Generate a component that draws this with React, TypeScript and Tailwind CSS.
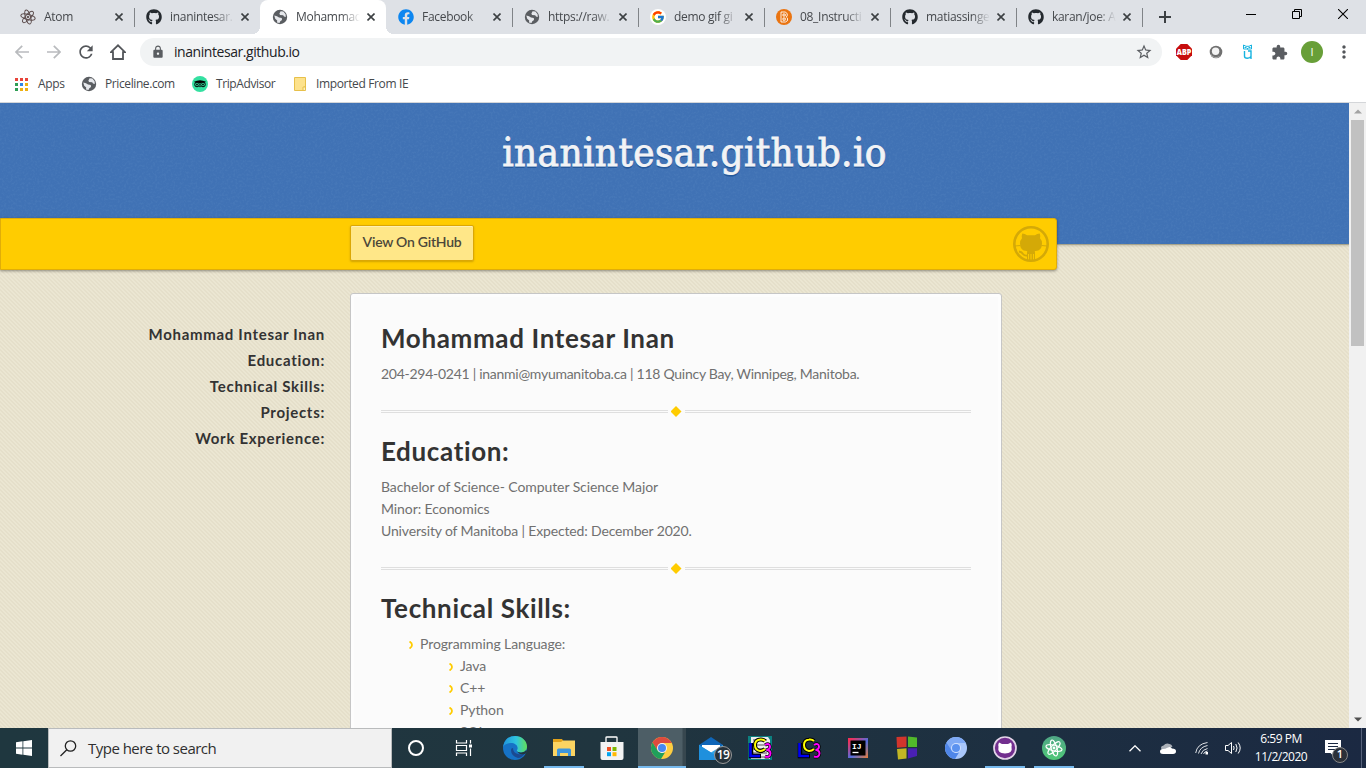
import React from "react";
import { FaGithub, FaFacebook } from "react-icons/fa";
import { FcGoogle } from "react-icons/fc";
import { MdLock, MdRefresh, MdStarBorder, MdMoreVert, MdExtension } from "react-icons/md";

function Globe({ size = 16 }: { size?: number }) {
  return (
    <svg width={size} height={size} viewBox="0 0 16 16">
      <circle cx="8" cy="8" r="7.2" fill="#5a5d61" />
      <path d="M2.3 6.6 L5 7.3 L7 8.4 L9.8 9 L10 11 L8.3 12.2 L7.5 14 L5 13.6 L5.2 11.4 L3.2 9.8 Z" fill="#e6e8ec" />
      <path d="M8.6 2.2 L11.4 2.6 L13.6 5.2 L13.8 8 L12 7.6 L11.2 6.2 L8 6 L7.4 4.6 Z" fill="#e6e8ec" />
    </svg>
  );
}

function Atom({ size = 16, color = "#5b4b4b", width = 1 }: { size?: number; color?: string; width?: number }) {
  return (
    <svg width={size} height={size} viewBox="0 0 16 16" fill="none" stroke={color} strokeWidth={width}>
      <ellipse cx="8" cy="8" rx="7.300" ry="2.500" transform="rotate(14 8 8)" />
      <ellipse cx="8" cy="8" rx="7.300" ry="2.500" transform="rotate(74 8 8)" />
      <ellipse cx="8" cy="8" rx="7.300" ry="2.500" transform="rotate(134 8 8)" />
      <circle cx="8" cy="8" r=".8" fill={color} />
    </svg>
  );
}

function Bitnami() {
  return (
    <svg width="16" height="16" viewBox="0 0 16 16">
      <circle cx="8" cy="8" r="8" fill="#ea7411" />
      <path d="M5 3h4.2l2 1.6v2.2L10.300 8l1.200 1.200v2.400L9.500 13H5z M7 5v2h2.200V5z M7 9v2.200h2.200V9z" fill="none" stroke="#fff" strokeWidth=".9" />
    </svg>
  );
}

function GoogleTab() {
  return (
    <span className="flex size-4 items-center justify-center rounded-full bg-white">
      <FcGoogle size={14} />
    </span>
  );
}

const tabs: { title: string; icon: React.ReactNode; active?: boolean; divider?: boolean }[] = [
  { title: "Atom", icon: <Atom />, divider: true },
  { title: "inanintesar.", icon: <FaGithub size={16} color="#24292e" /> },
  { title: "Mohammad", icon: <Globe />, active: true },
  { title: "Facebook", icon: <FaFacebook size={16} color="#0d86f0" />, divider: true },
  { title: "https://raw.", icon: <Globe />, divider: true },
  { title: "demo gif gi", icon: <GoogleTab />, divider: true },
  { title: "08_Instructi", icon: <Bitnami />, divider: true },
  { title: "matiassinge", icon: <FaGithub size={16} color="#24292e" />, divider: true },
  { title: "karan/joe: A", icon: <FaGithub size={16} color="#24292e" />, divider: true },
];

function Cross() {
  return (
    <svg width="8" height="8" viewBox="0 0 8 8" stroke="#3c4043" strokeWidth="1.6">
      <path d="M.5 .5 7.500 7.500M7.500 .5 .5 7.500" />
    </svg>
  );
}

function TabStrip() {
  return (
    <div className="flex h-[34px] shrink-0 bg-[#dee1e6] pl-2">
      {tabs.map((t) => (
        <div
          key={t.title}
          className={
            "relative flex h-[34px] w-[126px] shrink-0 items-center pl-3 " +
            (t.active ? "rounded-t-lg bg-white" : "")
          }
        >
          {t.active && (
            <>
              <span className="absolute bottom-0 -left-2 size-2 bg-[radial-gradient(circle_at_0_0,#dee1e6_8px,#fff_8px)]" />
              <span className="absolute -right-2 bottom-0 size-2 bg-[radial-gradient(circle_at_100%_0,#dee1e6_8px,#fff_8px)]" />
            </>
          )}
          {t.icon}
          <span className="ml-2 w-[67px] text-[12px] leading-4 tracking-[-0.3px] whitespace-nowrap text-[#45484c] [mask-image:linear-gradient(to_right,#000_45px,transparent_64px)]">
            {t.title}
          </span>
          <span className="ml-1"><Cross /></span>
          {t.divider && <span className="absolute top-2 right-[-1px] h-[19px] w-px bg-[#808387]" />}
        </div>
      ))}
      <div className="flex w-[46px] items-center justify-center">
        <svg width="12" height="12" viewBox="0 0 12 12" stroke="#3c4043" strokeWidth="2"><path d="M6 0V12M0 6H12" /></svg>
      </div>
      <div className="ml-auto flex h-7 items-center gap-9 pr-[18px]">
        <svg width="10" height="10" viewBox="0 0 10 10" stroke="#000"><path d="M0 5.500H10" /></svg>
        <svg width="10" height="10" viewBox="0 0 10 10" fill="none" stroke="#000"><path d="M.5 2.500H7.500V9.500H.5ZM2.500 2.500V.5H9.500V7.500H7.500" /></svg>
        <svg width="10" height="10" viewBox="0 0 10 10" stroke="#000" strokeWidth="1.100"><path d="M0 0 10 10M10 0 0 10" /></svg>
      </div>
    </div>
  );
}

function Toolbar() {
  return (
    <div className="flex h-9 shrink-0 items-center bg-white">
      <div className="flex w-[140px] items-center pl-[15px]">
        <svg width="14" height="14" viewBox="0 0 14 14" fill="none" stroke="#b9bbbe" strokeWidth="1.700"><path d="M14 7H1.200M7.200 .8 1 7l6.200 6.200" /></svg>
        <svg className="ml-[18px]" width="14" height="14" viewBox="0 0 14 14" fill="none" stroke="#b9bbbe" strokeWidth="1.700"><path d="M0 7H12.800M6.800 .8 13 7l-6.200 6.200" /></svg>
        <MdRefresh className="ml-[15px]" size={20} color="#53565a" />
        <svg className="ml-[14px]" width="16" height="16" viewBox="0 0 16 16" fill="none" stroke="#53565a" strokeWidth="1.800"><path d="M1 8.200 8 1.300l7 6.900H13V15H3V8.200Z" /></svg>
      </div>
      <div className="flex h-7 w-[1022px] items-center rounded-full bg-[#f1f3f4] pr-[9px] pl-[11px]">
        <MdLock size={14} color="#5a5d61" />
        <span className="ml-[9px] text-[14px] leading-5 tracking-[-0.44px] text-[#202124]">inanintesar.github.io</span>
        <MdStarBorder className="ml-auto" size={18} color="#5a5d61" />
      </div>
      <div className="flex flex-1 items-center pl-[14px]">
        <svg width="16" height="16" viewBox="0 0 16 16">
          <path d="M4.700 0h6.600L16 4.700v6.600L11.300 16H4.700L0 11.300V4.700Z" fill="#c70d0d" />
          <text x="8" y="10.800" fontSize="8" fontWeight="800" fill="#fff" textAnchor="middle" textLength="14.500" lengthAdjust="spacingAndGlyphs">ABP</text>
        </svg>
        <svg className="ml-[17px]" width="14" height="14" viewBox="0 0 14 14">
          <circle cx="7" cy="7" r="6.300" fill="#707070" />
          <circle cx="6.600" cy="6.200" r="3.700" fill="#f4f4f4" />
          <path d="M1.500 9a6 6 0 0 0 9 2.500" stroke="#aaa" fill="none" />
        </svg>
        <svg className="ml-[19px]" width="12" height="16" viewBox="0 0 12 16" fill="none" stroke="#17b3e0">
          <path d="M1.500 1 4 2.300h3L9.500 1v4h-8Z" strokeWidth="1" />
          <path d="M2.500 3.500h2M6.500 3.500h2M5.500 4v1.500" strokeWidth="1" />
          <path d="M2.500 7V12.300q0 2 2.800 2t3.700-2V7H6M9 12.500V15" strokeWidth="1.400" />
        </svg>
        <MdExtension className="ml-[17px]" size={17} color="#5a5d61" />
        <span className="ml-[13px] flex size-[22px] items-center justify-center rounded-full bg-[#689f38] text-[11px] text-white">I</span>
        <MdMoreVert className="ml-[11px]" size={20} color="#53565a" />
      </div>
    </div>
  );
}

const appColors = ["#e8443a", "#e8443a", "#e8443a", "#2f9e55", "#2f86e8", "#eeb011", "#2f9e55", "#eeb011", "#eeb011"];

function Bookmarks() {
  return (
    <div className="flex h-[33px] shrink-0 items-center border-b border-[#d4d6d9] bg-white pb-1 pl-[15px] text-[12px] text-[#45484c]">
      <div className="grid grid-cols-3 gap-[2px]">
        {appColors.map((c, i) => (
          <span key={i} className="size-[3px]" style={{ background: c }} />
        ))}
      </div>
      <span className="ml-[10px] w-[43px] tracking-[-0.3px]">Apps</span>
      <Globe />
      <span className="ml-2 w-[87px] tracking-[-0.4px]">Priceline.com</span>
      <svg width="16" height="16" viewBox="0 0 16 16">
        <circle cx="8" cy="8" r="8" fill="#34e0a1" />
        <path d="M2 5.800Q8 2.500 14 5.800L12.500 7h-9Z" />
        <g fill="#34e0a1" stroke="#000" strokeWidth="1"><circle cx="5" cy="8.500" r="2.300" /><circle cx="11" cy="8.500" r="2.300" /></g>
        <circle cx="5" cy="8.500" r=".9" /><circle cx="11" cy="8.500" r=".9" /><path d="m7 10 1 1.500L9 10Z" />
      </svg>
      <span className="ml-2 w-[78px] tracking-[-0.4px]">TripAdvisor</span>
      <svg width="12" height="14" viewBox="0 0 12 14"><path d="M.5 .5h11v9.500h-1.500v3.500H.5Z" fill="#fde28c" stroke="#e7c04b" /><path d="M9 10h2.500v3.500H9Z" fill="#fff0ba" stroke="#e7c04b" /></svg>
      <span className="ml-[10px] tracking-[-0.36px]">Imported From IE</span>
    </div>
  );
}

function Octocat() {
  return (
    <svg width="36" height="36" viewBox="0 0 36 36" fill="#d4a907">
      <circle cx="18" cy="18" r="16.700" fill="none" stroke="#d4a907" strokeWidth="2.600" />
      <path d="M9.300 7.500q2.700 0 4.700 1.800h8q2-1.800 4.700-1.800 1 2.500.3 4.800 2 2 2 5.200 0 7-6.500 7.600h-9Q7 24.500 7 17.500q0-3.200 2-5.200-.7-2.300.3-4.800Z" />
      <path d="M14 26q0-1.500 1.500-2h5q1.500.5 1.500 2v9h-1.100v-7h-.9v7h-1.500v-7h-1v7h-1.500v-7h-.9v7H14Z" />
      <path d="M6 25.500q3 .5 4 2.500 1.500 2 4.500 1.500" fill="none" stroke="#d4a907" strokeWidth="1.800" />
      <path d="M2 20 7.500 19.500M28.500 19.500l5.500 .5" stroke="#d4a907" strokeWidth="1" />
    </svg>
  );
}

function Divider() {
  return (
    <div className="flex h-[51px] items-center gap-[3px] pt-px">
      <span className="h-[3px] flex-1 border-y border-[#dfdfdf]" />
      <svg width="11" height="11" viewBox="0 0 11 11"><path d="M5 0 10.500 5.500 5 11 -.5 5.500Z" fill="#ffcc00" /></svg>
      <span className="h-[3px] flex-1 border-y border-[#dfdfdf]" />
    </div>
  );
}

function Heading({ children }: { children: React.ReactNode }) {
  return <h1 className="mb-[10px] h-[30px] text-[26px] leading-[30px] font-bold tracking-[0.64px] whitespace-nowrap text-[#333]">{children}</h1>;
}

function Item({ children }: { children: React.ReactNode }) {
  return (
    <li className="-ml-px flex tracking-[-0.1px]">
      <span className="flex w-[10px] shrink-0 items-center pt-0.5">
        <svg className="-ml-px" width="5" height="8" viewBox="0 0 5 8" fill="none" stroke="#ffcc00" strokeWidth="1.800"><path d="M.5 .5q2.500 1.500 2.500 3.500T.5 7.500" /></svg>
      </span>
      {children}
    </li>
  );
}

function Page() {
  return (
    <div className="flex min-h-0 flex-1">
      <div className="w-[1349px] overflow-hidden bg-[#eae6d1] bg-[linear-gradient(45deg,#e5dfca_25%,#ebe6d2_25%,#ebe6d2_50%,#e5dfca_50%,#e5dfca_75%,#ebe6d2_75%)] bg-[length:4px_4px] font-[Lato,sans-serif]">
        <header className="relative h-[142px] border-b border-[#a9a58c] bg-[#4072b5] shadow-[0_1px_2px_rgba(0,0,0,0.15)]">
          <svg className="absolute inset-0 opacity-15" width="1349" height="141">
            <filter id="grain" x="0" y="0" width="1" height="1"><feTurbulence type="fractalNoise" baseFrequency="0.450" numOctaves="2" /><feColorMatrix values="0 0 0 0 .15  0 0 0 0 .32  0 0 0 0 .6  3 0 0 0 -1.300" /></filter>
            <rect width="1349" height="141" filter="url(#grain)" />
          </svg>
          <h1 className="relative pt-[23px] pl-[40px] text-center font-['DejaVu_Serif_Condensed','DejaVu_Serif',serif] text-[40px] leading-[52px] tracking-[0.37px] font-stretch-condensed text-[#f2f3f5] [-webkit-text-stroke:0.8px_#f2f3f5] [text-shadow:0_2px_0_#25589a]">
            inanintesar.github.io
          </h1>
        </header>
        <div className="relative mt-[-27px] flex h-[52px] w-[1057px] items-center rounded-r-[3px] border border-[#e0ad08] bg-[#ffcc00] pr-[7px] pl-[349px] shadow-[0_1px_3px_rgba(0,0,0,0.4)]">
          <a className="mb-[2px] flex h-9 w-[124px] items-center justify-center rounded-[2px] border border-[#dba705] bg-[#ffe788] pb-[3px] text-[14px] font-semibold tracking-[-0.25px] text-[#4c473a] shadow-[inset_0_1px_0_#fff0b5,0_1px_2px_rgba(120,90,0,0.35)]">View On GitHub</a>
          <span className="ml-auto"><Octocat /></span>
        </div>
        <div className="mt-[23px] flex">
          <nav className="flex w-[350px] flex-col pt-[28px] pr-[25px] text-right text-[15px] leading-[26px] font-bold tracking-[0.7px] text-[#333]">
            <span>Mohammad Intesar Inan</span>
            <span>Education:</span>
            <span>Technical Skills:</span>
            <span>Projects:</span>
            <span>Work Experience:</span>
          </nav>
          <section className="h-[560px] w-[652px] rounded-[3px] border border-[#c6c6c6] bg-[#fbfbfb] px-[30px] pt-[29px] text-[14px] leading-[22px] text-[#707070] shadow-[inset_0_0_0_3px_#fdfdfd]">
            <Heading>Mohammad Intesar Inan</Heading>
            <p className="tracking-[-0.27px]">204-294-0241 | inanmi@myumanitoba.ca | 118 Quincy Bay, Winnipeg, Manitoba.</p>
            <Divider />
            <Heading>Education:</Heading>
            <p className="tracking-[-0.08px]">Bachelor of Science- Computer Science Major<br />Minor: Economics<br /><span className="tracking-[-0.15px]">University of Manitoba | Expected: December 2020.</span></p>
            <Divider />
            <Heading>Technical Skills:</Heading>
            <ul className="pl-[30px]">
              <Item>Programming Language:</Item>
              <ul className="pl-[40px]">
                <Item>Java</Item>
                <Item>C++</Item>
                <Item>Python</Item>
                <Item>SQL</Item>
              </ul>
            </ul>
          </section>
        </div>
      </div>
      <div className="flex w-[17px] flex-col items-center bg-[#f1f1f1]">
        <svg className="h-[17px]" width="8" height="4" viewBox="0 0 8 4"><path d="M0 4 4 0l4 4Z" fill="#a3a3a3" /></svg>
        <div className="h-[226px] w-[13px] bg-[#c1c1c1]" />
        <svg className="mt-auto h-[17px]" width="8" height="4" viewBox="0 0 8 4"><path d="M0 0 4 4l4-4Z" fill="#505050" /></svg>
      </div>
    </div>
  );
}

function Lc3({ page }: { page?: boolean }) {
  return (
    <svg width="24" height="24" viewBox="0 0 24 24" fill="none">
      {page && <><path d="M0 0h24v24H0Z" fill="#0c8080" /><path d="M3 1h17l2 3v19H3Z" fill="#eee" /><path d="M5 4h14M5 9h14M5 13h14M5 17h14M5 21h14" stroke="#555" /></>}
      <path d="M3 7v13h10" stroke="#000" strokeWidth="4.500" />
      <path d="M17 5q-2-2-5-1.500Q7 4 7 9t5 6q3 0 5-2" stroke="#000" strokeWidth="4" />
      <path d="M2.500 7v13H12" stroke="#0000f5" strokeWidth="2.600" />
      <path d="M17 5q-2-2-5-1.500Q7 4 7 9t5 6q3 0 5-2" stroke="#ffff00" strokeWidth="2" />
      <path d="M17 9q4.500-2.500 5 1.500 0 3-3.500 3.500 4 .2 4 3.500-.5 4.500-5.500 3" stroke="#000" strokeWidth="3.400" />
      <path d="M17 9q4.500-2.500 5 1.500 0 3-3.500 3.500 4 .2 4 3.500-.5 4.500-5.500 3" stroke="#f0f" strokeWidth="2" />
    </svg>
  );
}

function ChromeIcon({ blue }: { blue?: boolean }) {
  const [a, b, c, d] = blue ? ["#7ea9f5", "#4f86e8", "#a9c7fb", "#5b92f0"] : ["#dd4b3e", "#20a05b", "#fdcd41", "#4688f1"];
  return (
    <svg width="22" height="22" viewBox="0 0 22 22">
      <circle cx="11" cy="11" r="11" fill={c} />
      <path d="M1.500 5.500A11 11 0 0 1 20.500 5.500L21 6H11L6.500 13.500Z" fill={a} />
      <path d="M1.500 5.500 6.700 13.500Q9 16.500 14 15.500L10 22A11 11 0 0 1 1.500 5.500Z" fill={b} />
      <circle cx="11" cy="11" r="5" fill={blue ? "#cfe0ff" : "#f4f4f4"} />
      <circle cx="11" cy="11" r="4" fill={d} />
    </svg>
  );
}

function Slot({ children, running, active }: { children: React.ReactNode; running?: boolean; active?: boolean }) {
  return (
    <div
      className={
        "relative flex h-10 shrink-0 items-center justify-center " +
        (active ? "ml-px w-12 bg-[linear-gradient(to_right,#4d5e66_44px,#37474f_45px)]" : "w-[49px]")
      }
    >
      {children}
      {running && <span className="absolute bottom-0 left-[5px] h-0.5 w-10 bg-[#76b9ed]" />}
      {active && <span className="absolute bottom-0 left-0 h-0.5 w-full bg-[#76b9ed]" />}
    </div>
  );
}

function Taskbar() {
  return (
    <div className="flex h-10 shrink-0 bg-[linear-gradient(to_right,#1f373f,#20353f_45%,#1d2f41_75%,#1b2942)] text-white">
      <div className="flex w-12 items-center justify-center">
        <svg width="16" height="16" viewBox="0 0 16 16" fill="#fff"><path d="M0 2.200 6.500 1.300V7.500H0ZM7.300 1.200 16 0V7.500H7.300ZM0 8.400H6.500V14.700L0 13.800ZM7.300 8.400H16V16L7.300 14.800Z" /></svg>
      </div>
      <div className="flex w-[344px] items-center border border-[#b9bbbc] bg-[#f1f1f1] pl-[11px] text-[#2f2f2f]">
        <svg width="17" height="17" viewBox="0 0 17 17" fill="none" stroke="#222" strokeWidth="1.300"><circle cx="10.500" cy="6" r="5.200" /><path d="M6.800 9.700 .5 16" /></svg>
        <span className="ml-[11px] text-[15px] tracking-[-0.52px]">Type here to search</span>
      </div>
      <Slot><span className="mr-px size-4 rounded-full border-2 border-white" /></Slot>
      <Slot>
        <svg className="mr-[3px]" width="18" height="16" viewBox="0 0 18 16" fill="none" stroke="#fff" strokeWidth="1.200"><path d="M1.500 0V3H11.500V0M1.500 16V13H11.500V16M1.500 5.500H11.500V10.500H1.500ZM15.500 0V3.500M15.500 8.500V16" /><path d="M14 4.500h3v3h-3Z" fill="#fff" stroke="none" /></svg>
      </Slot>
      <Slot>
        <svg width="24" height="24" viewBox="0 0 24 24">
          <defs><linearGradient id="edgeTop" x1="0" x2="1"><stop stopColor="#2093dc" /><stop offset=".55" stopColor="#2fc5df" /><stop offset="1" stopColor="#62df58" /></linearGradient></defs>
          <circle cx="12" cy="12" r="12" fill="#1672c6" />
          <path d="M0 11Q2 0 12 0c7 0 12 5 12 10.500 0 4-3 6-6.500 6-3 0-4.500-1.200-3.300-2.700C16 10 12 7 8 7Q2.500 7 0 11Z" fill="url(#edgeTop)" />
          <path d="M8 14q0 6 7 8 4 0 7-5-3 2-7 1-5-1-5-6Q8 12 8 14Z" fill="#1b4a91" />
          <path d="M13.800 14.800q1 2 4.500 1.700 3.500-.2 5-2.500L24 16l-1.600 1.800q-6 2-8.600-3Z" fill="#20353f" />
        </svg>
      </Slot>
      <Slot running>
        <svg width="22" height="20" viewBox="0 0 22 20"><path d="M0 1h9l2 3v5H0Z" fill="#e3a21a" /><path d="M0 4h8l2-1.500h12V18H0Z" fill="#fcd462" /><path d="M4 18v-6q0-1.500 1.500-1.500h11q1.500 0 1.500 1.500v6h-3v-3H7v3Z" fill="#3f96dc" /></svg>
      </Slot>
      <Slot>
        <svg className="mr-px" width="24" height="24" viewBox="0 0 24 24"><path d="M6 6V1.500Q6 1 7 1h9q1 0 1 .5V6" fill="none" stroke="#fff" strokeWidth="1.300" /><path d="M.5 6h23v16q0 2-2 2h-19q-2 0-2-2Z" fill="#f3f3f3" /><path d="M7 11h4v4H7Z" fill="#f15022" /><path d="M12.500 11h4v4h-4Z" fill="#7fba00" /><path d="M7 16.200h4v4H7Z" fill="#02a4ef" /><path d="M12.500 16.200h4v4h-4Z" fill="#ffb901" /></svg>
      </Slot>
      <Slot active><ChromeIcon /></Slot>
      <Slot>
        <svg width="24" height="23" viewBox="0 0 24 23"><path d="M0 8 12 0 24 8v15H0Z" fill="#0f66b8" /><path d="M3 8h18v8H3Z" fill="#fff" /><path d="M0 8 12 15.500 24 8v15H0Z" fill="#2ea6ea" /><path d="M0 8 24 23H0Z" fill="#1f90dd" /></svg>
        <span className="absolute top-[18px] left-[28px] flex size-[18px] items-center justify-center rounded-full border border-[#999] bg-[#26323a] pb-px text-[12px] font-semibold tracking-[-0.7px]">19</span>
      </Slot>
      <Slot><Lc3 page /></Slot>
      <Slot><Lc3 /></Slot>
      <Slot>
        <svg width="20" height="20" viewBox="0 0 20 20"><defs><linearGradient id="idea" x1="0" y1="0" x2="1" y2="1"><stop offset=".1" stopColor="#f0315a" /><stop offset=".55" stopColor="#526ee0" /><stop offset="1" stopColor="#e67a38" /></linearGradient></defs><path d="M0 0h20v20H0Z" fill="url(#idea)" /><path d="M2.500 2.500h15v15h-15Z" /><text x="4" y="10.500" fill="#fff" fontSize="8" fontWeight="700" fontFamily="Liberation Mono">IJ</text><path d="M4.500 14.500h6" stroke="#fff" strokeWidth="1.300" /></svg>
      </Slot>
      <Slot>
        <svg width="22" height="24" viewBox="0 0 22 24"><path d="M.5 1 10.500 .5V11L1 11.700Z" fill="#d2352c" /><path d="M12 .5 21 1.500 21 11 12 11Z" fill="#52b82b" /><path d="M1 13 10.500 12.300V22.500L2 23.500Z" fill="#c2b624" /><path d="M12 12.300H21V20L12 22.500Z" fill="#4a20b3" /></svg>
      </Slot>
      <Slot><ChromeIcon blue /></Slot>
      <Slot running>
        <svg width="24" height="24" viewBox="0 0 24 24"><circle cx="12" cy="12" r="11" fill="#722f8e" stroke="#e3d5e8" strokeWidth="1.700" /><path d="M6 6.500 9 8h6l3-1.500q1 2 .5 4Q20 17.500 12 17.500T5.500 10.500Q5 8.500 6 6.500Z" fill="#fff" /></svg>
      </Slot>
      <Slot running><span className="flex size-6 items-center justify-center rounded-full bg-[linear-gradient(#4fa685,#50c878)]"><Atom size={18} color="#fff" width={1} /></span></Slot>
      <div className="ml-auto flex items-center">
        <svg width="12" height="7" viewBox="0 0 12 7" fill="none" stroke="#fff" strokeWidth="1.300"><path d="M.5 6.300 6 .8l5.500 5.500" /></svg>
        <svg className="ml-[19px]" width="16" height="11" viewBox="0 0 16 11"><path d="M2 7Q-.5 3 3.500 2.500 6-.5 9.500 1q2 0 3 2.500L4 9Z" fill="#aab0b8" /><path d="M3 11Q0 11 0 8.500T3 6q2 0 5-1.500 2.500-1.500 4 1 4 0 4 2.700T13 11Z" fill="#fff" /></svg>
        <svg className="ml-[19px]" width="14" height="14" viewBox="0 0 14 14" fill="none" stroke="#dfe2e6" strokeWidth="1"><path d="M.7 12Q2 3 12.500 1.500M3.500 12.500Q5 6 12.500 4.500M6 13q1.500-4.500 6.500-5.500M8.500 13q1-2.500 4-3" /><path d="M10.500 11h2.500v2.500h-2.500Z" fill="#fff" stroke="none" /></svg>
        <svg className="ml-4" width="17" height="14" viewBox="0 0 17 14" fill="none" stroke="#fff"><path d="M.5 4.500H3L6.500 1.500v11L3 9.500H.5ZM8.500 5q1.200 2 0 4M10.800 3q2.500 4 0 8M13.200 1.500q4 5.500 0 11" /></svg>
        <div className="ml-[11px] w-[56px] text-center text-[12px] leading-[18px] tracking-[-0.5px] whitespace-nowrap">6:59 PM<br />11/2/2020</div>
        <div className="relative ml-4 flex h-10 w-[41px] items-center">
          <svg width="16" height="16" viewBox="0 0 16 16"><path d="M0 0h16v13H8.500v3L5.500 13H0Z" fill="#fff" /><path d="M3 3.500h10M3 6.500h10M3 9.500h7" stroke="#1b2942" /></svg>
          <span className="absolute top-[19px] left-[7px] flex size-4 items-center justify-center rounded-full border border-[#888] bg-[#2b3038] pb-px text-[11px] font-semibold">1</span>
          <span className="absolute top-0 right-1 h-10 w-px bg-[#56617a]" />
        </div>
      </div>
    </div>
  );
}

export default function App() {
  return (
    <div className="flex h-[768px] w-[1366px] flex-col overflow-hidden bg-white font-['Open_Sans',sans-serif]">
      <TabStrip />
      <Toolbar />
      <Bookmarks />
      <Page />
      <Taskbar />
    </div>
  );
}
